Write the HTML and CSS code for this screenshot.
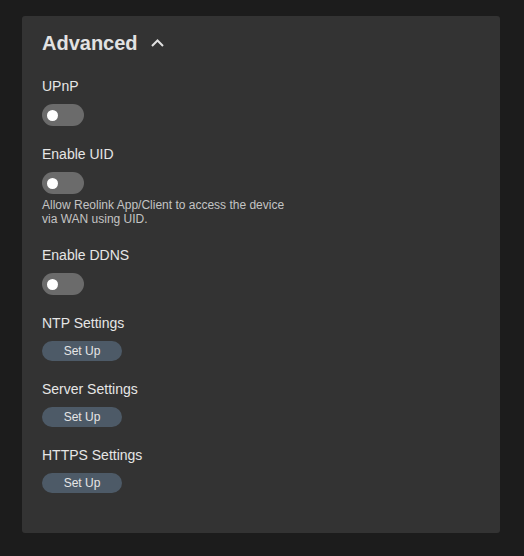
FILE: index.html
```html
<!DOCTYPE html>
<html>
<head>
<meta charset="utf-8">
<link rel="stylesheet" href="styles.css">
</head>
<body>
<div class="card">
  <div class="header">
    <span class="title">Advanced</span>
    <svg class="chevron" width="13" height="8" viewBox="0 0 13 8"><path d="M1 7 L6.5 1.5 L12 7" fill="none" stroke="#e0e0e0" stroke-width="2"/></svg>
  </div>
  <div class="list">
    <div class="item">
      <div class="label">UPnP</div>
      <div class="toggle"><span class="knob"></span></div>
    </div>
    <div class="item">
      <div class="label">Enable UID</div>
      <div class="toggle"><span class="knob"></span></div>
      <div class="desc">Allow Reolink App/Client to access the device via WAN using UID.</div>
    </div>
    <div class="item">
      <div class="label">Enable DDNS</div>
      <div class="toggle"><span class="knob"></span></div>
    </div>
    <div class="item">
      <div class="label">NTP Settings</div>
      <button class="btn">Set Up</button>
    </div>
    <div class="item">
      <div class="label">Server Settings</div>
      <button class="btn">Set Up</button>
    </div>
    <div class="item">
      <div class="label">HTTPS Settings</div>
      <button class="btn">Set Up</button>
    </div>
  </div>
</div>
</body>
</html>
```
FILE: styles.css
```css
html, body {
  margin: 0;
  padding: 0;
  background: #1c1c1c;
}
body {
  padding: 16px 24px 23px 22px;
  font-family: "Liberation Sans", Arial, sans-serif;
}
.card {
  background: #333333;
  border-radius: 3px;
  padding: 13px 20px 40px 20px;
  height: 517px;
  box-sizing: border-box;
}
.header {
  display: flex;
  align-items: center;
  gap: 13px;
  height: 28px;
}
.title {
  font-size: 20px;
  font-weight: bold;
  line-height: 28px;
  color: #e2e2e2;
}
.chevron {
  display: block;
  margin-top: -1px;
}
.list {
  display: flex;
  flex-direction: column;
  gap: 18px;
  margin-top: 19px;
}
.item {
  display: flex;
  flex-direction: column;
  align-items: flex-start;
}
.label {
  font-size: 14px;
  line-height: 20px;
  color: #e6e6e6;
  margin-bottom: 8px;
}
.toggle {
  width: 42px;
  height: 22px;
  border-radius: 11px;
  background: #6b6b6b;
  display: flex;
  align-items: center;
  padding-left: 5px;
  box-sizing: border-box;
}
.knob {
  width: 11px;
  height: 11px;
  border-radius: 50%;
  background: #ffffff;
}
.desc {
  font-size: 12px;
  line-height: 14px;
  color: #c4c4c4;
  max-width: 250px;
  margin-top: 4px;
  margin-bottom: 1px;
}
.btn {
  width: 80px;
  height: 20px;
  border: none;
  border-radius: 10px;
  background: #4d5a67;
  color: #e6e6e6;
  font-family: "Liberation Sans", Arial, sans-serif;
  font-size: 12px;
  padding: 0;
  line-height: 20px;
}
```
